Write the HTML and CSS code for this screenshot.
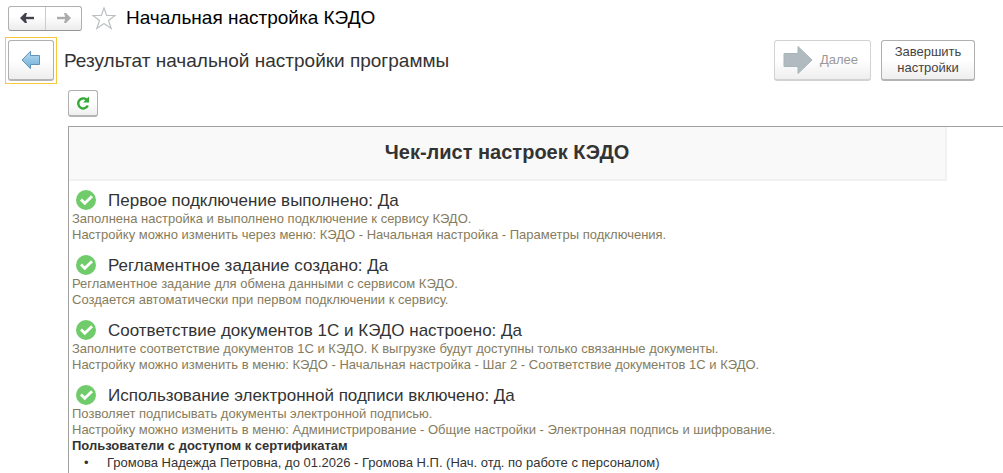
FILE: index.html
```html
<!DOCTYPE html>
<html lang="ru">
<head>
<meta charset="utf-8">
<meta name="viewport" content="width=device-width, initial-scale=1">
<title>Начальная настройка КЭДО</title>
<link rel="stylesheet" href="styles.css">
</head>
<body>
<svg class="defs" aria-hidden="true">
  <symbol id="check" viewBox="0 0 20 20">
    <circle cx="10" cy="10" r="10" fill="#70cc6b"/>
    <path d="M5 9.500 8.800 13.200 16 6.200" fill="none" stroke="#fff" stroke-width="2.800"/>
  </symbol>
</svg>
<header class="topbar">
  <div class="history">
    <button class="history-btn" type="button" aria-label="Назад">
      <svg width="14" height="10" viewBox="0 0 14 10"><path d="M14 5H4" fill="none" stroke="#45404d" stroke-width="2.400"/><path d="M0 5 5 0H7L5.500 5 7 10H5Z" fill="#45404d"/></svg>
    </button>
    <button class="history-btn" type="button" aria-label="Вперед" disabled>
      <svg width="14" height="10" viewBox="0 0 14 10"><path d="M0 5H10" fill="none" stroke="#acacac" stroke-width="2.400"/><path d="M14 5 9 0H7L8.500 5 7 10H9Z" fill="#acacac"/></svg>
    </button>
  </div>
  <button class="star" type="button" aria-label="Добавить в избранное">
    <svg width="24" height="24" viewBox="0 0 24 24"><path d="M12 2 14.700 9.500H23L16.500 14.500 19.200 22.500 12 17.600 4.800 22.500 7.500 14.500 1 9.500H9.300Z" fill="#fff" stroke="#bcc0c2" stroke-width="1.200"/></svg>
  </button>
  <h1 class="title">Начальная настройка КЭДО</h1>
</header>
<div class="stepbar">
  <button class="btn btn-back" type="button" aria-label="Предыдущий шаг">
    <svg width="20" height="20" viewBox="0 0 20 20">
      <defs><linearGradient id="blue" x1="0" y1="0" x2="0" y2="1"><stop offset="0" stop-color="#b9dcf2"/><stop offset="1" stop-color="#6faed6"/></linearGradient></defs>
      <path d="M1 10 9.500 1.300V5.500H18.500V14.500H9.500V18.700Z" fill="url(#blue)" stroke="#5f93b8" stroke-width="1"/>
    </svg>
  </button>
  <h2 class="step-title">Результат начальной настройки программы</h2>
  <button class="btn btn-next" type="button" disabled>
    <svg width="30" height="30" viewBox="0 0 30 30"><path d="M1 8.500H15V1.500L29 15 15 28.500V21.500H1Z" fill="#b0babf" stroke="#a3b6bd" stroke-width="1"/></svg>
    <span>Далее</span>
  </button>
  <button class="btn btn-finish" type="button">Завершить настройки</button>
</div>
<main class="content">
  <button class="btn btn-refresh" type="button" aria-label="Обновить">
    <svg width="14" height="14" viewBox="0 0 14 14"><path d="M10.500 3.600A5 5 0 1 0 11.800 9.500" fill="none" stroke="#35a935" stroke-width="2.400"/><path d="M13 0.500V6.500H7Z" fill="#35a935"/></svg>
  </button>
  <section class="report">
    <h2 class="report-title">Чек-лист настроек КЭДО</h2>
    <article class="item">
      <h3 class="item-title"><svg class="check"><use href="#check"/></svg>Первое подключение выполнено: Да</h3>
      <p class="note">Заполнена настройка и выполнено подключение к сервису КЭДО.</p>
      <p class="note">Настройку можно изменить через меню: КЭДО - Начальная настройка - Параметры подключения.</p>
    </article>
    <article class="item">
      <h3 class="item-title"><svg class="check"><use href="#check"/></svg>Регламентное задание создано: Да</h3>
      <p class="note">Регламентное задание для обмена данными с сервисом КЭДО.</p>
      <p class="note">Создается автоматически при первом подключении к сервису.</p>
    </article>
    <article class="item">
      <h3 class="item-title"><svg class="check"><use href="#check"/></svg>Соответствие документов 1С и КЭДО настроено: Да</h3>
      <p class="note">Заполните соответствие документов 1С и КЭДО. К выгрузке будут доступны только связанные документы.</p>
      <p class="note">Настройку можно изменить в меню: КЭДО - Начальная настройка - Шаг 2 - Соответствие документов 1С и КЭДО.</p>
    </article>
    <article class="item">
      <h3 class="item-title"><svg class="check"><use href="#check"/></svg>Использование электронной подписи включено: Да</h3>
      <p class="note">Позволяет подписывать документы электронной подписью.</p>
      <p class="note">Настройку можно изменить в меню: Администрирование - Общие настройки - Электронная подпись и шифрование.</p>
      <h4 class="users-title">Пользователи с доступом к сертификатам</h4>
      <ul class="users">
        <li>Громова Надежда Петровна, до 01.2026 - Громова Н.П. (Нач. отд. по работе с персоналом)</li>
      </ul>
    </article>
  </section>
</main>
</body>
</html>
```
FILE: styles.css
```css
* {
  box-sizing: border-box;
}

body {
  display: flex;
  flex-direction: column;
  min-height: 100vh;
  margin: 0;
  background: #fff;
  color: #333;
  font: 13px/16px "Liberation Sans", Arial, sans-serif;
}

h1, h2, h3, h4, p, ul {
  margin: 0;
  padding: 0;
}

button {
  padding: 0;
  font: inherit;
  color: inherit;
}

svg {
  display: block;
  flex: none;
}

.defs {
  position: absolute;
  width: 0;
  height: 0;
}

.topbar {
  display: flex;
  align-items: center;
  height: 36px;
  padding-left: 8px;
}

.history {
  display: flex;
  height: 25px;
  border: 1px solid #b0b0b0;
  border-bottom-color: #969696;
  border-radius: 3px;
  background: linear-gradient(#fff 40%, #ececec);
}

.history-btn {
  display: flex;
  align-items: center;
  justify-content: center;
  width: 36px;
  border: 0;
  background: none;
}

.history-btn + .history-btn {
  border-left: 1px solid #ccc;
}

.star {
  margin-left: 10px;
  border: 0;
  background: none;
}

.title {
  margin-left: 10px;
  color: #000;
  font-size: 19px;
  font-weight: 400;
  line-height: 24px;
}

.stepbar {
  display: flex;
  align-items: center;
  gap: 10px;
  padding: 4px 28px 0 8px;
}

.btn {
  display: flex;
  align-items: center;
  justify-content: center;
  height: 41px;
  border: 1px solid #b0b0b0;
  border-bottom: 2px solid #b4b4b4;
  border-radius: 3px;
  background: linear-gradient(#fff 50%, #eee);
}

.btn-back {
  position: relative;
  width: 46px;
}

.btn-back::after {
  content: "";
  position: absolute;
  inset: -4px -4px -5px;
  border: 1px solid #f5c93a;
}

.step-title {
  flex: 1;
  font-size: 19px;
  font-weight: 400;
  line-height: 24px;
}

.btn-next {
  gap: 7px;
  width: 97px;
  padding-right: 4px;
  border-color: #d2d2d2;
  color: #999;
}

.btn-finish {
  width: 94px;
  padding: 0 8px;
  color: #444;
}

.content {
  display: flex;
  flex: 1;
  flex-direction: column;
  padding: 9px 0 0 68px;
}

.btn-refresh {
  width: 30px;
  height: 27px;
}

.report {
  flex: 1;
  margin-top: 9px;
  border-top: 1px solid #a0a0a0;
  border-left: 1px solid #a0a0a0;
}

.report-title {
  max-width: 878px;
  margin-bottom: 9px;
  padding: 12px 0 14px;
  border: solid #f1f1f1;
  border-width: 0 2px 2px 0;
  background: #f9f9f9;
  font-size: 20px;
  line-height: 26px;
  text-align: center;
}

.item {
  padding-left: 3px;
}

.item + .item {
  margin-top: 12px;
}

.item-title {
  display: flex;
  align-items: flex-start;
  gap: 12px;
  padding-left: 4px;
  font-size: 17px;
  font-weight: 400;
  line-height: 21px;
}

.check {
  width: 20px;
  height: 20px;
}

.note {
  color: #857c5e;
}

.users-title {
  font-size: 13px;
}

.users {
  list-style: none;
}

.users li {
  display: flex;
  padding-left: 12px;
  line-height: 18px;
}

.users li::before {
  content: "•";
  width: 23px;
}
```
